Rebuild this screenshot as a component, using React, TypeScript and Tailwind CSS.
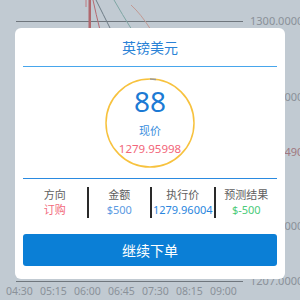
import React from "react";

const font = { fontFamily: '"Noto Sans", "Noto Sans CJK SC", sans-serif' };

function Chart() {
  const times = ["04:30", "05:15", "06:00", "06:45", "07:30", "08:15", "09:00"];
  return (
    <svg className="absolute inset-0" width="300" height="300" viewBox="0 0 300 300">
      <line x1="16" y1="21.5" x2="243" y2="21.5" stroke="#6f767d" strokeWidth="1" />
      <line x1="16" y1="281.5" x2="243" y2="281.5" stroke="#6f767d" strokeWidth="1" />
      <line x1="86" y1="0" x2="86" y2="7" stroke="#c07a80" strokeWidth="1" />
      <rect x="88.5" y="0" width="2.5" height="30" fill="#b0686e" />
      <path d="M93 0 Q96 14 100 30" stroke="#b56a72" strokeWidth="1" fill="none" />
      <path d="M96 0 Q103 14 111 30" stroke="#6e7c86" strokeWidth="1" fill="none" />
      <path d="M114 0 Q122 14 132 30" stroke="#7fa6a4" strokeWidth="1" fill="none" />
      <path d="M131 5 Q141 14 151 30" stroke="#c29a94" strokeWidth="1" fill="none" />
      <text x="250" y="25" fontSize="11" fill="#8a9199" style={font}>1300.00000</text>
      <text x="250" y="101" fontSize="11" fill="#8a9199" style={font}>1290.00000</text>
      <text x="250" y="156" fontSize="11" fill="#a07880" style={font}>1279.94908</text>
      <text x="250" y="230" fontSize="11" fill="#8a9199" style={font}>1210.00000</text>
      <text x="250" y="285" fontSize="11" fill="#8a9199" style={font}>1207.00000</text>
      {times.map((t, i) => (
        <text key={t} x={6 + i * 34} y="295" fontSize="10.5" fill="#8a9199" style={font}>{t}</text>
      ))}
    </svg>
  );
}

export default function App() {
  const cols = [
    { h: "方向", v: "订购", c: "text-[#f26a7c]" },
    { h: "金额", v: "$500", c: "text-[#5c9ae2]" },
    { h: "执行价", v: "1279.96004", c: "text-[#2a86de]" },
    { h: "预测结果", v: "$-500", c: "text-[#4ccb7a]" },
  ];
  return (
    <div className="relative w-[300px] h-[300px] overflow-hidden bg-[#c1cad2]" style={font}>
      <Chart />
      <div className="relative pt-[28px] px-[15px]">
        <div className="bg-white rounded-[6px] px-[8px] pb-[13px] flex flex-col">
          <div className="h-[38px] flex items-center justify-center text-[14px] text-[#2a82d6]">英镑美元</div>
          <div className="h-px bg-[#48a6ec]" />
          <div className="mt-[11px] flex justify-center">
            <div className="relative w-[90px] h-[90px] flex flex-col items-center">
              <svg className="absolute inset-0" width="90" height="90" viewBox="0 0 90 90">
                <circle cx="45" cy="45" r="44" fill="none" stroke="#f7c23e" strokeWidth="1.5" />
                <path d="M45 1 A44 44 0 0 1 51 1.4" fill="none" stroke="#9a9a9a" strokeWidth="1.5" />
              </svg>
              <div className="mt-[8px] text-[28px] leading-[30px] text-[#1c7ad4]">88</div>
              <div className="mt-[8px] text-[11px] leading-[14px] text-[#3a8ede]">现价</div>
              <div className="mt-[3px] text-[11.5px] leading-[16px] text-[#f2667a]">1279.95998</div>
            </div>
          </div>
          <div className="mt-[10px] h-px bg-[#2a8ae0]" />
          <div className="mt-[8px] grid grid-cols-4 h-[31px]">
            {cols.map((c, i) => (
              <div
                key={c.h}
                className={`flex flex-col items-center justify-center ${i > 0 ? "border-l-2 border-[#2a2a2a]" : ""}`}
              >
                <div className="text-[11px] leading-[14px] text-[#606060]">{c.h}</div>
                <div className={`text-[11px] leading-[15px] ${c.c}`}>{c.v}</div>
              </div>
            ))}
          </div>
          <button className="mt-[16px] h-[32px] rounded-[3px] bg-[#0b7fd6] text-white text-[14px]">继续下单</button>
        </div>
      </div>
    </div>
  );
}
